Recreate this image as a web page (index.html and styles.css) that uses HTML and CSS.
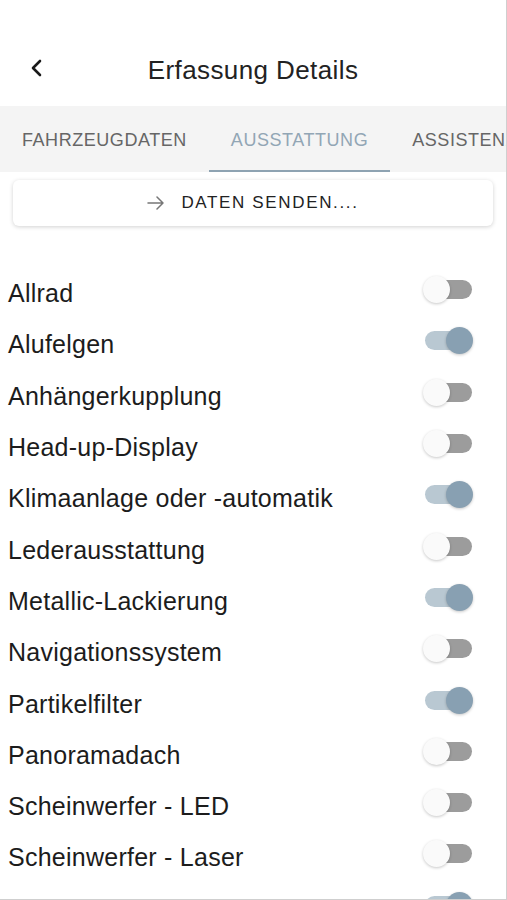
FILE: index.html
```html
<!DOCTYPE html>
<html lang="de">
<head>
    <meta charset="UTF-8">
    <meta name="viewport" content="width=device-width, initial-scale=1.0">
    <title>Erfassung Details</title>
    <link rel="stylesheet" href="styles.css">
</head>
<body>
    <div class="screen">
        <header class="topbar">
            <button class="back" type="button" aria-label="Zurück">
                <svg width="14" height="18" viewBox="0 0 14 18"><path d="M10 2 L3 9 L10 16" fill="none" stroke="#1a1a1a" stroke-width="2.6" stroke-linecap="round" stroke-linejoin="round"/></svg>
            </button>
            <h1>Erfassung Details</h1>
        </header>

        <nav class="tabs">
            <a href="#" class="tab">Fahrzeugdaten</a>
            <a href="#" class="tab active">Ausstattung</a>
            <a href="#" class="tab">Assistenzsysteme</a>
        </nav>

        <div class="send-wrap">
            <button class="send-button" type="button">
                <svg width="18" height="14" viewBox="0 0 18 14"><path d="M1 7 H16 M10 1 L16 7 L10 13" fill="none" stroke="#777" stroke-width="1.5" stroke-linecap="round" stroke-linejoin="round"/></svg>
                <span>Daten senden....</span>
            </button>
        </div>

        <ul class="options">
            <li><span>Allrad</span><span class="toggle"></span></li>
            <li><span>Alufelgen</span><span class="toggle on"></span></li>
            <li><span>Anhängerkupplung</span><span class="toggle"></span></li>
            <li><span>Head-up-Display</span><span class="toggle"></span></li>
            <li><span>Klimaanlage oder -automatik</span><span class="toggle on"></span></li>
            <li><span>Lederausstattung</span><span class="toggle"></span></li>
            <li><span>Metallic-Lackierung</span><span class="toggle on"></span></li>
            <li><span>Navigationssystem</span><span class="toggle"></span></li>
            <li><span>Partikelfilter</span><span class="toggle on"></span></li>
            <li><span>Panoramadach</span><span class="toggle"></span></li>
            <li><span>Scheinwerfer - LED</span><span class="toggle"></span></li>
            <li><span>Scheinwerfer - Laser</span><span class="toggle"></span></li>
            <li><span>Scheinwerfer - Xenon</span><span class="toggle on"></span></li>
        </ul>
    </div>
</body>
</html>
```

FILE: styles.css
```css
body {
    margin: 0;
    font-family: "Liberation Sans", Arial, sans-serif;
    color: #222;
    background: #fff;
}
.screen {
    height: 900px;
    box-sizing: border-box;
    border-right: 1px solid #cfcfcf;
    border-bottom: 1px solid #cfcfcf;
    overflow: hidden;
}
.topbar {
    height: 106px;
    display: flex;
    align-items: center;
    justify-content: center;
    position: relative;
    padding-top: 34px;
    box-sizing: border-box;
}
.topbar h1 {
    margin: 0;
    font-size: 26px;
    letter-spacing: 0.4px;
    font-weight: normal;
    color: #222;
}
.back {
    position: absolute;
    left: 30px;
    top: 59px;
    border: none;
    background: none;
    padding: 0;
}
.tabs {
    display: flex;
    height: 66px;
    background-color: #f4f4f4;
    white-space: nowrap;
    overflow: hidden;
}
.tab {
    display: flex;
    align-items: center;
    padding: 5px 22px 0;
    font-size: 18px;
    letter-spacing: 0.55px;
    text-transform: uppercase;
    text-decoration: none;
    color: #666;
    border-bottom: 2px solid transparent;
}
.tab.active {
    color: #92a6b5;
    border-bottom-color: #8ea3b2;
}
.send-wrap {
    padding: 8px 13px 0;
}
.send-button {
    width: 100%;
    height: 46px;
    display: flex;
    align-items: center;
    justify-content: center;
    gap: 16px;
    background: #fff;
    border: none;
    border-radius: 6px;
    box-shadow: 0 1px 4px rgba(0, 0, 0, 0.18);
    font-family: inherit;
    font-size: 17px;
    letter-spacing: 1.65px;
    text-transform: uppercase;
    color: #222;
}
.options {
    list-style: none;
    margin: 0;
    padding: 42px 34px 0 8px;
}
.options li {
    height: 51.3px;
    display: flex;
    align-items: center;
    justify-content: space-between;
    font-size: 25px;
    letter-spacing: 0.25px;
    color: #1c1c1c;
}
.toggle {
    position: relative;
    width: 47px;
    height: 19px;
    border-radius: 10px;
    background: #9c9c9c;
    margin-bottom: 8px;
}
.toggle::after {
    content: "";
    position: absolute;
    left: -2px;
    top: -4px;
    width: 27px;
    height: 27px;
    border-radius: 50%;
    background: #fafafa;
    box-shadow: 0 1px 3px rgba(0, 0, 0, 0.22);
}
.toggle.on {
    background: #b9c8d2;
}
.toggle.on::after {
    left: auto;
    right: -1px;
    background: #88a0b2;
}
```
